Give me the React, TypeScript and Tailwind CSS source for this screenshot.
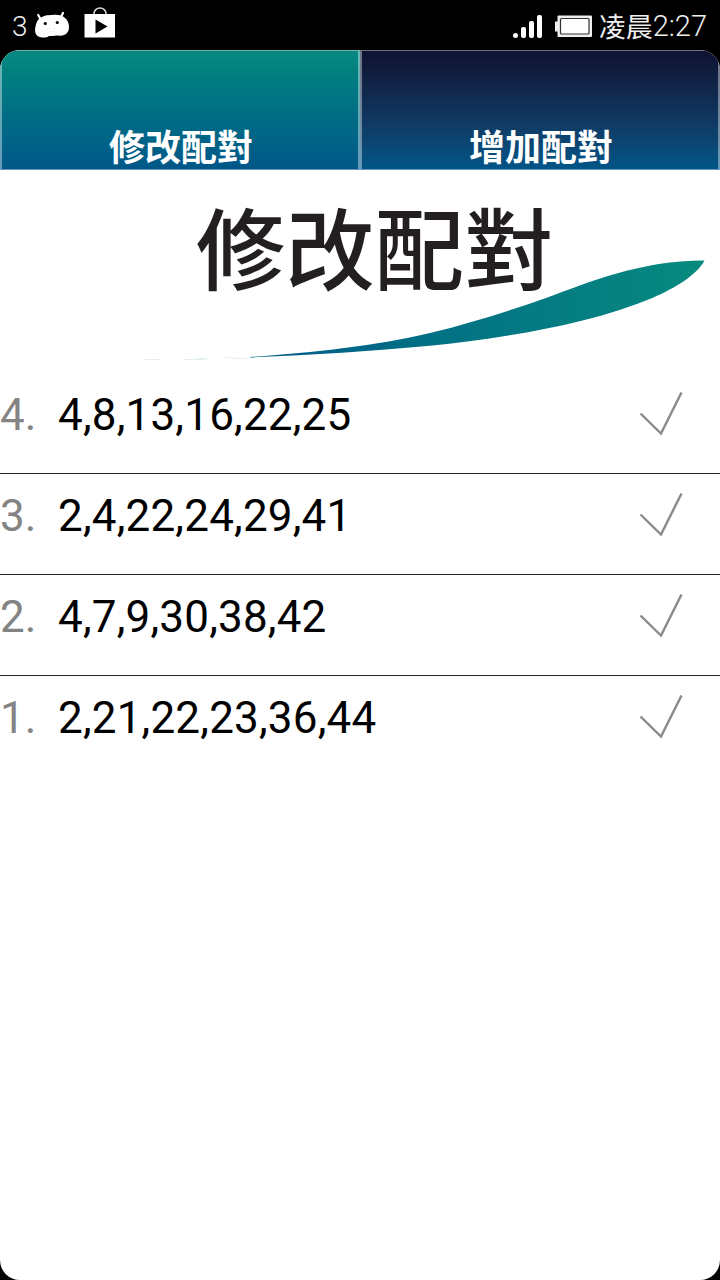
const tabs = [
  { label: "修改配對", fill: "from-[#08897f] to-[#005688]" },
  { label: "增加配對", fill: "from-[#0e1230] to-[#005688]" },
];

const pairs = [
  { id: 4, numbers: [4, 8, 13, 16, 22, 25] },
  { id: 3, numbers: [2, 4, 22, 24, 29, 41] },
  { id: 2, numbers: [4, 7, 9, 30, 38, 42] },
  { id: 1, numbers: [2, 21, 22, 23, 36, 44] },
];

function StatusBar() {
  return (
    <header className="flex h-[50px] items-center bg-black pl-[12px] pr-[13px] text-[28px] leading-none text-[#eee]">
      <span className="w-[22px] pt-[3px] font-light">3</span>
      <svg className="h-[50px] w-[36px]" viewBox="0 0 36 50" fill="#fff">
        <path d="M4.200 15 L7 20 M29 13 L26.500 18" stroke="#fff" strokeWidth="2.200" strokeLinecap="round" />
        <path d="M5 19 C9 15.500 13 15 18 15 C24 14.500 28 15 31 18 C35 21 36 28 34 31.500 C32 35.500 28 36 23 35.500 C20 36 17 36 15 36 C12 38.500 3 38.500 1.500 33 C0.500 30 1.500 22 5 19 Z" />
        <circle cx="11.300" cy="23.500" r="1.600" fill="#000" />
        <circle cx="23.300" cy="22.500" r="1.600" fill="#000" />
        <path d="M15 28.500h1M20 28.500h1M16 31.500h1" stroke="#ddd" />
      </svg>
      <svg className="ml-[14px] h-[50px] w-[32px]" viewBox="0 0 32 50">
        <path d="M10 15 V13.500 A6 5.500 0 0 1 22 13.500 V15" fill="none" stroke="#ddd" strokeWidth="1.500" />
        <path d="M0.500 14 H31 V37.500 H0.500 Z" fill="#fff" />
        <path d="M11.500 19.500 L23.500 26.500 L11.500 33.500 Z" fill="#000" />
      </svg>
      <svg className="ml-auto h-[50px] w-[32px]" viewBox="0 0 32 50" fill="#fff">
        <rect x="1" y="33" width="5" height="5" rx="2.500" />
        <rect x="9" y="27" width="5" height="11" rx="2" />
        <rect x="17" y="21" width="5" height="17" rx="2" />
        <rect x="25" y="15" width="5" height="23" rx="2" />
      </svg>
      <svg className="ml-[11px] h-[50px] w-[38px]" viewBox="0 0 38 50">
        <rect x="0" y="21.500" width="4" height="10" fill="#eee" />
        <rect x="2.500" y="15.500" width="34.500" height="21.500" rx="1" fill="#eee" />
        <rect x="5.500" y="18.500" width="28.500" height="15.500" rx="1" fill="#fff" stroke="#333" strokeWidth="1.200" />
      </svg>
      <span className="ml-[6px] flex items-center">
        <span className="font-['Noto_Sans_CJK_TC',sans-serif] text-[27px]">凌晨</span>
        <span className="pt-[3px] text-[29px] font-light">2:27</span>
      </span>
    </header>
  );
}

function Swoosh() {
  return (
    <svg className="absolute inset-0 h-[203px] w-full" viewBox="0 170 720 203">
      <defs>
        <linearGradient id="swoosh" gradientUnits="userSpaceOnUse" x1="250" y1="0" x2="704" y2="0">
          <stop offset="0.1" stopColor="#005f88" />
          <stop offset="0.350" stopColor="#016e85" />
          <stop offset="1" stopColor="#078a7f" />
        </linearGradient>
      </defs>
      <path
        d="M250 357 C310 353 376 346 430 333 C470 323.300 508 311.500 546.700 297.700 C590 282 640 260.500 704.500 260.500 C697 275 675 288 653 297.700 C585 326 500 338 430 345.800 C370 351.500 310 355 250 357.500 Z"
        fill="url(#swoosh)"
      />
      <path d="M145 359.500h16M184 359.500h22M196 358.500h12M225 357.500h8M233 358.500h14" stroke="#e4eff2" />
    </svg>
  );
}

function Check() {
  return (
    <svg className="h-[48px] w-[48px]" viewBox="0 0 48 48" fill="none" stroke="#8a8a8a" strokeWidth="2.400">
      <path d="M4.500 22.500 L25 42.500 L45.500 1.500" />
    </svg>
  );
}

export default function App() {
  return (
    <div className="h-[1280px] w-[720px] overflow-hidden bg-black font-['Roboto',sans-serif]">
      <StatusBar />
      <main className="h-[1230px] overflow-hidden rounded-[20px] bg-white">
        <nav className="flex h-[120px]">
          {tabs.map((t) => (
            <button
              key={t.label}
              className={`flex flex-1 items-end justify-center border border-x-2 border-white/40 bg-linear-to-b bg-origin-border pb-[6px] pl-[2px] font-['Noto_Sans_CJK_TC',sans-serif] text-[36px] leading-[36px] font-bold text-white ${t.fill}`}
            >
              {t.label}
            </button>
          ))}
        </nav>
        <section className="relative h-[203px]">
          <h1 className="pt-[20px] pl-[196px] font-['Noto_Sans_CJK_TC',sans-serif] text-[89px] leading-[110px] font-medium tracking-[0.5px] text-[#231f20]">修改配對</h1>
          <Swoosh />
        </section>
        <ul>
          {pairs.map((p, i) => (
            <li key={p.id} className={`flex h-[101px] pt-[16px] text-[44px] leading-[52px] ${i < pairs.length - 1 ? "border-b border-[#222]" : ""}`}>
              <span className="w-[58px] text-[#848484]">{p.id}.</span>
              <span className="tracking-[0.19px] text-black">{p.numbers.join(",")}</span>
              <span className="mt-[2px] mr-[36px] ml-auto">
                <Check />
              </span>
            </li>
          ))}
        </ul>
      </main>
    </div>
  );
}
